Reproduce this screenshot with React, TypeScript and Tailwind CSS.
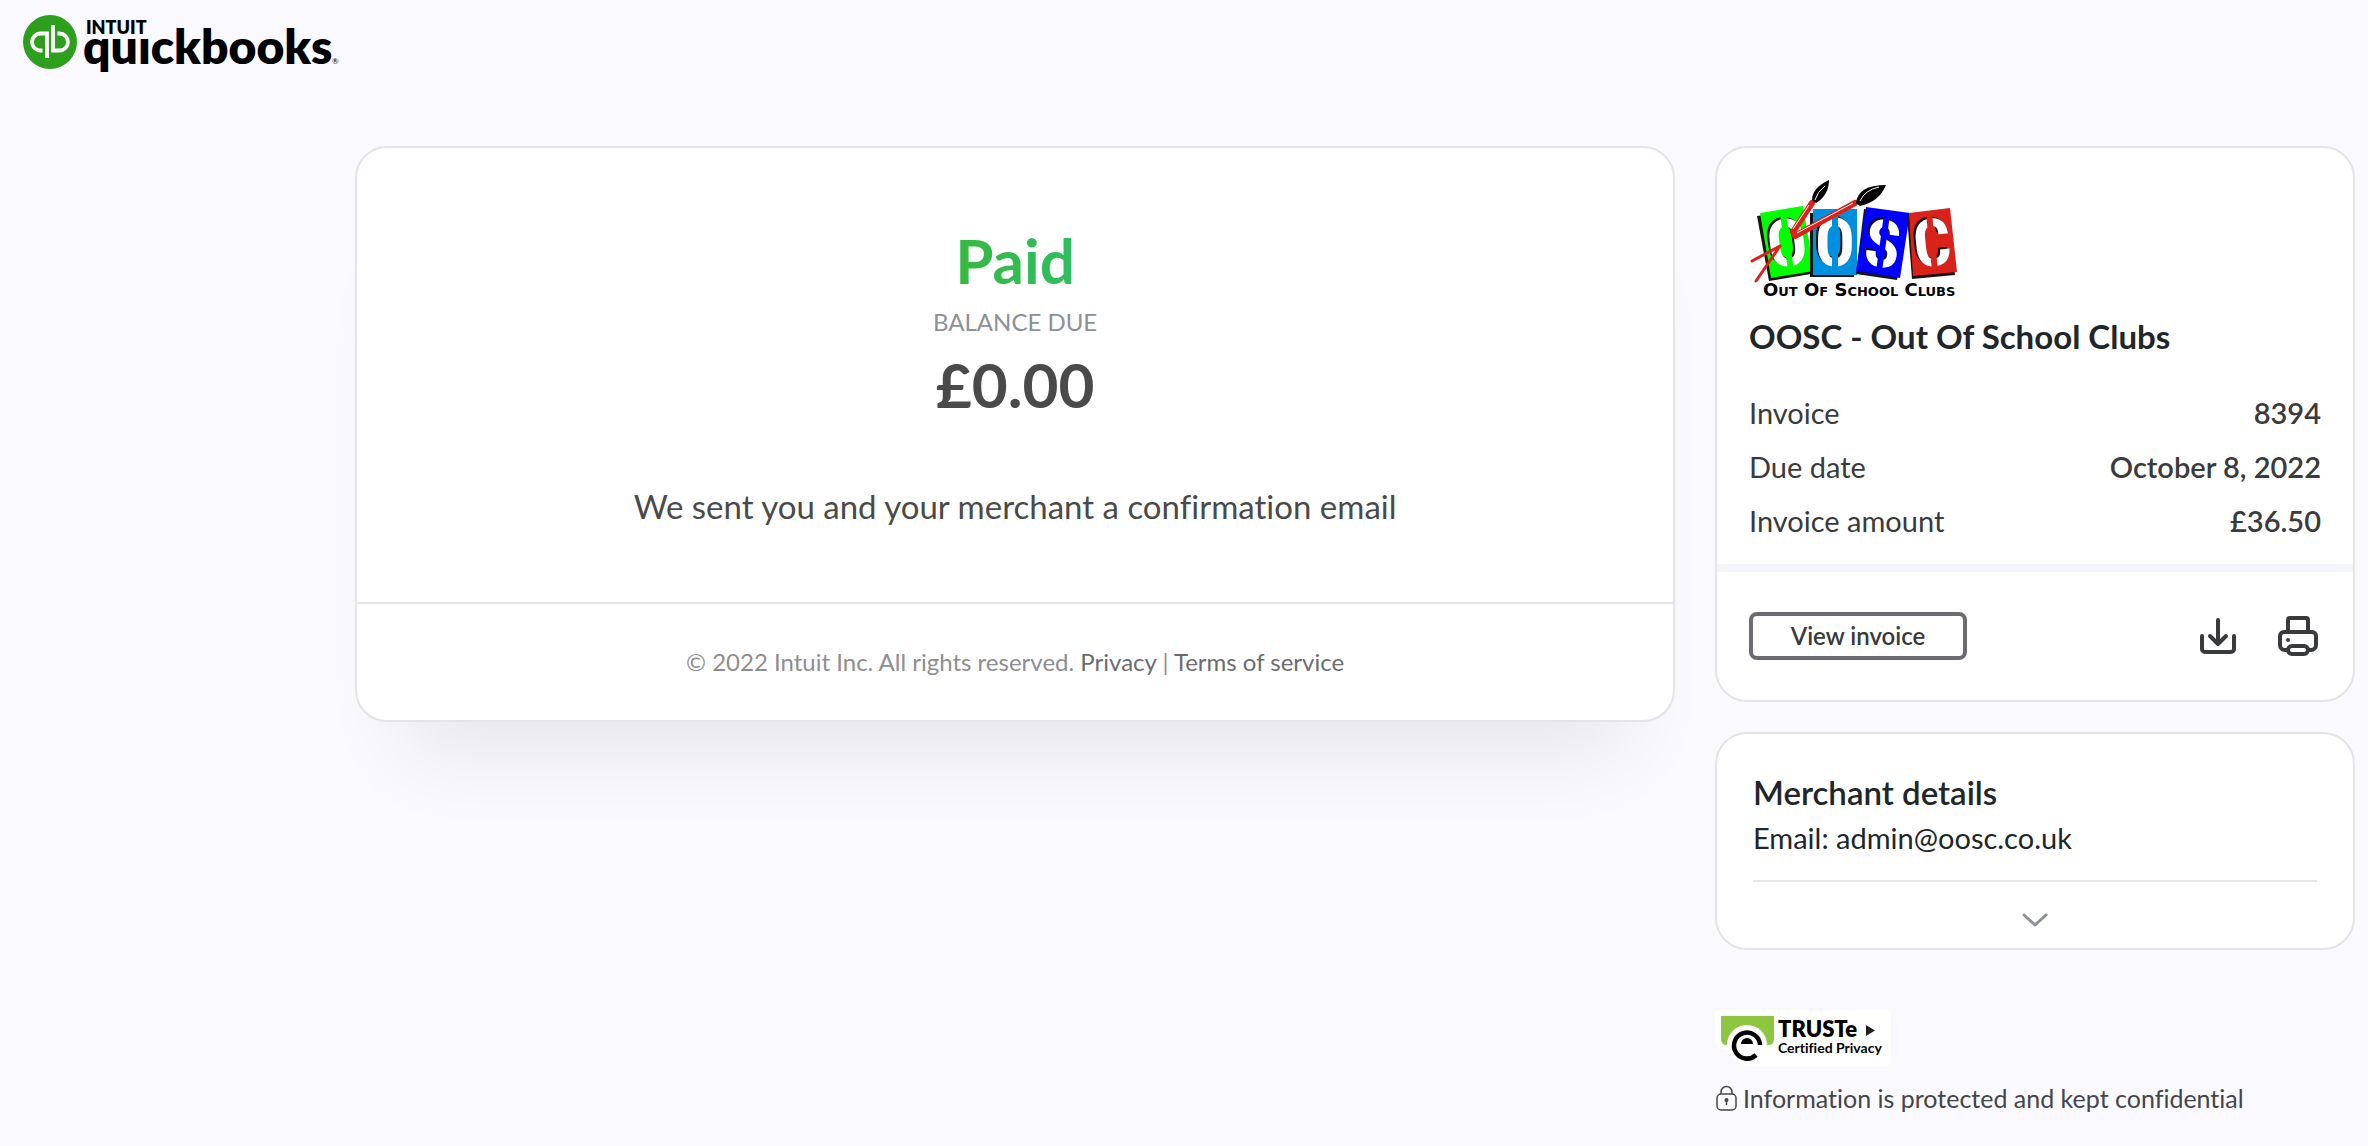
import type { ReactNode } from "react";

function QuickbooksLogo() {
  return (
    <svg width="320" height="66" viewBox="0 0 320 66" role="img" aria-label="Intuit QuickBooks">
      <circle cx="27" cy="28" r="27" fill="#2ca01c" />
      <g fill="none" stroke="#fff" strokeWidth="3.800">
        <path d="M24 44V19.500H17.500a8.500 8.500 0 0 0 0 17H19.500" />
        <path d="M30 11V36.500H36.500a8.500 8.500 0 0 0 0-17H34.500" />
      </g>
      <text x="60" y="50" fontFamily="Lato" fontWeight="800" fontSize="48">
        quickbooks
      </text>
      <rect x="116" y="6" width="14" height="17" fill="#faf9ff" />
      <text x="63" y="20" fontFamily="Lato" fontWeight="800" fontSize="18">
        INTUIT
      </text>
      <text x="309" y="50" fontFamily="Lato" fontSize="8">
        ®
      </text>
    </svg>
  );
}

interface TileProps {
  letter: string;
  color: string;
  points: string;
  shadow: string;
  x: number;
  y: number;
  angle: number;
}

function Tile({ letter, color, points, shadow, x, y, angle }: TileProps) {
  return (
    <g>
      <polygon points={shadow} fill="#1a1512" />
      <polygon points={points} fill={color} />
      <g
        transform={`rotate(${angle} ${x} ${y})`}
        fontFamily="Liberation Sans Narrow, Roboto Condensed, Liberation Sans"
        fontWeight="700"
        fontSize="66"
        textAnchor="middle"
      >
        <text x={x - 2} y={y + 22} fill="#1a1512" aria-hidden="true">
          {letter}
        </text>
        <text x={x} y={y + 24} fill="#fff">
          {letter}
        </text>
        <rect x={x - 3} y={y - 27} width="6" height="53" fill={color} />
      </g>
    </g>
  );
}

function MerchantLogo() {
  return (
    <svg width="212" height="124" viewBox="0 0 212 124" role="img" aria-label="Out Of School Clubs">
      <Tile letter="O" color="#00ff00" points="11,35 54,28 65,93 22,100" shadow="8,38 50,32 62,96 20,103" x={38} y={64} angle={-8} />
      <Tile letter="O" color="#0090e0" points="64,31 108,31 108,97 64,97" shadow="61,35 105,35 105,99 61,99" x={86} y={64} angle={0} />
      <Tile letter="S" color="#0000ff" points="117,29 161,35 151,100 107,93" shadow="115,31 158,38 148,102 107,96" x={134} y={65} angle={8} />
      <Tile letter="C" color="#d9231a" points="160,35 201,30 208,94 164,98" shadow="158,38 200,34 206,97 163,101" x={183} y={64} angle={-6} />
      <g stroke="#d9231a" strokeLinecap="round" fill="none">
        <path d="M63 25 44 54" strokeWidth="6" />
        <path d="M106 25 46 58" strokeWidth="6" />
        <path d="M31 68 3 83M31 68 7 103" strokeWidth="3" />
      </g>
      <path d="M48 55 104 25M44 51 60 27" stroke="#fff" strokeWidth="1" />
      <path d="M80 2Q63 10 63 22L67 25Q80 17 80 2Z" fill="#000" />
      <path d="M137 7Q109 7 107 25L111 28Q130 24 137 7Z" fill="#000" />
      <path d="M76 8Q68 14 66 22M130 9Q116 12 111 23" stroke="#fff" strokeWidth="1" fill="none" />
      <text x="14" y="118" fontFamily="DejaVu Sans" fontWeight="700" fontSize="18" style={{ fontVariant: "small-caps" }}>
        Out Of School Clubs
      </text>
    </svg>
  );
}

function TrusteBadge() {
  return (
    <svg width="176" height="56" viewBox="0 0 176 56" role="img" aria-label="TRUSTe Certified Privacy">
      <path d="M0 0H170q6 0 6 6V50q0 6-6 6H32Q20 54 13 40Q0 40 0 28Z" fill="#fff" />
      <path d="M6 6H59V29q0 6-6 6H12q-6 0-6-6Z" fill="#8dc63f" />
      <circle cx="32" cy="35" r="20" fill="#fff" />
      <path d="M41 45A13 13 0 1 1 45 35" stroke="#000" strokeWidth="4.500" fill="none" />
      <path d="M26 34a6 6 0 0 1 12 0Z" />
      <text x="63" y="27" fontFamily="Lato" fontWeight="800" fontSize="22">
        TRUSTe
      </text>
      <path d="M151 15 160 20.500 151 26Z" fill="#231f20" />
      <text x="63" y="43" fontFamily="Lato" fontWeight="700" fontSize="14">
        Certified Privacy
      </text>
    </svg>
  );
}

function DownloadIcon() {
  return (
    <svg width="48" height="48" viewBox="0 0 48 48" fill="none" stroke="#393a3d" strokeWidth="4" strokeLinecap="round" strokeLinejoin="round">
      <path d="M25 8V32M17 24 25 32 33 24M9 24V37a3 3 0 0 0 3 3H38a3 3 0 0 0 3-3V24" />
    </svg>
  );
}

function PrintIcon() {
  return (
    <svg width="48" height="48" viewBox="0 0 48 48" fill="none" stroke="#393a3d" strokeWidth="4" strokeLinecap="round" strokeLinejoin="round">
      <path d="M15 20V8a2 2 0 0 1 2-2H33a2 2 0 0 1 2 2V20" />
      <path d="M15 38H12a5 5 0 0 1-5-5V24a4 4 0 0 1 4-4H39a4 4 0 0 1 4 4V33a5 5 0 0 1-5 5H35" />
      <rect x="15" y="34" width="20" height="8" rx="4" />
      <circle cx="15" cy="28" r="2" fill="#393a3d" stroke="none" />
    </svg>
  );
}

function LockIcon() {
  return (
    <svg width="22" height="26" viewBox="0 0 22 26" fill="none" stroke="#44454a" strokeWidth="1.500">
      <rect x="2" y="9" width="19" height="16" rx="4" />
      <path d="M6 9V7a5.500 5.500 0 0 1 11 0V9" />
      <circle cx="11.500" cy="15" r="2" fill="#44454a" stroke="none" />
      <path d="M11.500 15V20" />
    </svg>
  );
}

interface CardProps {
  children: ReactNode;
  className?: string;
}

function Card({ children, className = "" }: CardProps) {
  return (
    <section className={`rounded-[32px] border-2 border-[#e3e3e8] bg-white ${className}`}>
      {children}
    </section>
  );
}

const details = [
  { label: "Invoice", value: "8394" },
  { label: "Due date", value: "October 8, 2022" },
  { label: "Invoice amount", value: "£36.50" },
];

export default function App() {
  return (
    <div className="min-h-screen bg-[#faf9ff] font-['Lato',sans-serif] text-[#393a3d] [font-variant-ligatures:none]">
      <header className="px-[23px] pt-[14px]">
        <QuickbooksLogo />
      </header>
      <main className="mt-[66px] mr-[13px] ml-[15%] flex items-start gap-10">
        <Card className="flex-1 text-center shadow-[0_80px_80px_-50px_rgba(0,0,0,0.08)]">
          <div className="pt-[78px] pb-[76px]">
            <h1 className="text-[62px] leading-[68px] font-bold">
              <span className="bg-linear-to-r from-[#37b93f] to-[#2dbf60] bg-clip-text text-transparent">
                Paid
              </span>
            </h1>
            <p className="mt-3 text-2xl leading-8 text-[#8d9096]">BALANCE DUE</p>
            <p className="mt-[14px] text-[62px] leading-[64px] font-bold text-[#4a4a4a]">£0.00</p>
            <p className="mt-[70px] text-[33px] leading-10 text-[#4a4a4a]">
              We sent you and your merchant a confirmation email
            </p>
          </div>
          <footer className="border-t-2 border-[#e6e6e6] py-[42px] text-2xl leading-8 text-[#8d8d92]">
            © 2022 Intuit Inc. All rights reserved.{" "}
            <a href="#privacy" className="text-[#6b6c72]">Privacy</a> |{" "}
            <a href="#terms" className="text-[#6b6c72]">Terms of service</a>
          </footer>
        </Card>

        <aside className="w-[640px]">
          <Card>
            <div className="px-8 pt-[30px] pb-4">
              <MerchantLogo />
              <h2 className="mt-[14px] text-[33px] leading-10 font-bold text-[#21262b]">
                OOSC - Out Of School Clubs
              </h2>
              <dl className="mt-[30px] text-[29px] leading-[54px]">
                {details.map(({ label, value }) => (
                  <div key={label} className="flex justify-between">
                    <dt>{label}</dt>
                    <dd className="font-semibold">{value}</dd>
                  </div>
                ))}
              </dl>
            </div>
            <div className="flex items-center justify-between border-t-8 border-[#f4f5f8] px-8 py-10">
              <button className="flex h-12 w-[218px] items-center justify-center rounded-lg border-4 border-[#6b6c72] text-2xl leading-8 font-semibold">
                View invoice
              </button>
              <div className="flex gap-8">
                <button aria-label="Download">
                  <DownloadIcon />
                </button>
                <button aria-label="Print">
                  <PrintIcon />
                </button>
              </div>
            </div>
          </Card>

          <Card className="mt-[30px] px-9 pt-[38px] text-[#21262b]">
            <h3 className="text-[33px] leading-10 font-semibold">Merchant details</h3>
            <p className="mt-[6px] text-[29px] leading-10">Email: admin@oosc.co.uk</p>
            <div className="mt-[22px] flex justify-center border-t-2 border-[#e6e6e9] pt-[26px] pb-4">
              <button aria-label="Show more" className="p-1">
                <svg width="28" height="16" viewBox="0 0 28 16" fill="none" stroke="#8d9096" strokeWidth="3" strokeLinecap="round" strokeLinejoin="round">
                  <path d="M3 3 14 13 25 3" />
                </svg>
              </button>
            </div>
          </Card>

          <div className="mt-[60px]">
            <TrusteBadge />
            <p className="mt-4 flex items-center gap-[6px] text-[25px] leading-8 text-[#44454a]">
              <LockIcon />
              Information is protected and kept confidential
            </p>
          </div>
        </aside>
      </main>
    </div>
  );
}
